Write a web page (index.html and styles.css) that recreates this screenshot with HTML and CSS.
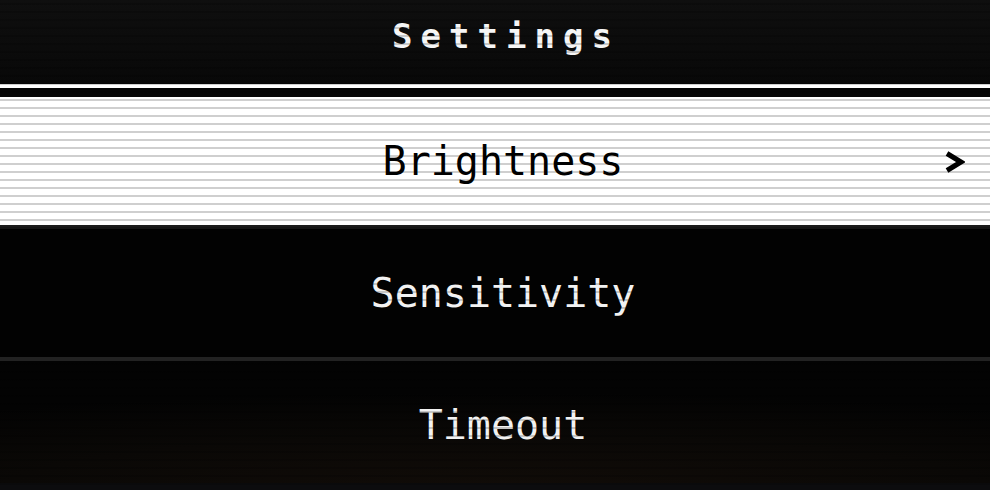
FILE: index.html
```html
<!DOCTYPE html>
<html lang="en">
<head>
<meta charset="utf-8">
<title>Settings</title>
<link rel="stylesheet" href="styles.css">
</head>
<body>
<div class="screen">
  <header class="header"><h1 class="title">Settings</h1></header>
  <ul class="menu">
    <li class="item selected">
      <span class="label">Brightness</span>
      <svg class="chev" width="20" height="22" viewBox="0 0 20 22"><polyline points="2,2.5 16,11 2,19.5" fill="none" stroke="#000" stroke-width="5" stroke-linejoin="miter" stroke-miterlimit="10"/></svg>
    </li>
    <li class="item"><span class="label">Sensitivity</span></li>
    <li class="item last"><span class="label">Timeout</span></li>
  </ul>
</div>
</body>
</html>
```
FILE: styles.css
```css
html, body {
  margin: 0;
  padding: 0;
  height: 100%;
}
body {
  background: #0c0c0e;
  font-family: "DejaVu Sans Mono", "Liberation Mono", monospace;
  overflow: hidden;
}
.screen {
  height: 490px;
  display: flex;
  flex-direction: column;
  position: relative;
  overflow: hidden;
}
.screen::after {
  content: "";
  position: absolute;
  inset: 0;
  pointer-events: none;
  background: repeating-linear-gradient(to bottom, transparent 0 3px, rgba(0,0,0,0.19) 3px 5px, transparent 5px 8px);
}
.header {
  height: 72px;
  padding-bottom: 12px;
  border-bottom: 4px solid #fff;
  background: linear-gradient(to bottom, #0f0f0f, #080808);
  display: flex;
  align-items: center;
  justify-content: center;
  flex-shrink: 0;
}
.title {
  margin: 0;
  padding-left: 22px;
  color: #f6f6f6;
  font-size: 34px;
  font-weight: bold;
  letter-spacing: 8px;
}
.menu {
  list-style: none;
  margin: 0;
  padding: 9px 0 0;
  background: #050505;
  display: flex;
  flex-direction: column;
}
.item {
  height: 128px;
  flex-shrink: 0;
  display: flex;
  align-items: center;
  justify-content: center;
  position: relative;
  padding-left: 16px;
  border-bottom: 4px solid #222;
  background: #020202;
  color: #f2f2f2;
  font-size: 40px;
}
.item.selected {
  background: #fff;
  color: #000;
  border-bottom-color: #1b1b1b;
}
.item.last {
  border-bottom: 0;
  background: radial-gradient(ellipse 90% 75% at 50% 100%, #110c08 0%, #0a0806 55%, #030303 100%);
  box-shadow: inset 0 -6px #0c0c0e;
}
.chev {
  position: absolute;
  right: 25px;
  top: 50%;
  margin-top: -10px;
}
```
